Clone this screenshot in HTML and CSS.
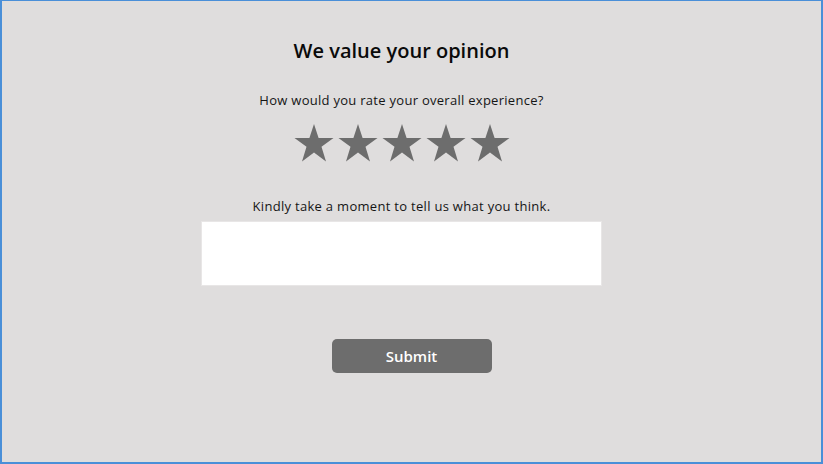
FILE: index.html
```html
<!DOCTYPE html>
<html>
<head>
<meta charset="utf-8">
<link rel="stylesheet" href="styles.css">
</head>
<body>
<div class="frame">
  <h1 class="title">We value your opinion</h1>
  <p class="question">How would you rate your overall experience?</p>
  <div class="stars">
    <svg class="star" viewBox="0 0 40 40"><polygon points="20,1 24.6,15 39.5,15 27.5,23.8 32,38.5 20,29.5 8,38.5 12.5,23.8 0.5,15 15.4,15"/></svg>
    <svg class="star" viewBox="0 0 40 40"><polygon points="20,1 24.6,15 39.5,15 27.5,23.8 32,38.5 20,29.5 8,38.5 12.5,23.8 0.5,15 15.4,15"/></svg>
    <svg class="star" viewBox="0 0 40 40"><polygon points="20,1 24.6,15 39.5,15 27.5,23.8 32,38.5 20,29.5 8,38.5 12.5,23.8 0.5,15 15.4,15"/></svg>
    <svg class="star" viewBox="0 0 40 40"><polygon points="20,1 24.6,15 39.5,15 27.5,23.8 32,38.5 20,29.5 8,38.5 12.5,23.8 0.5,15 15.4,15"/></svg>
    <svg class="star" viewBox="0 0 40 40"><polygon points="20,1 24.6,15 39.5,15 27.5,23.8 32,38.5 20,29.5 8,38.5 12.5,23.8 0.5,15 15.4,15"/></svg>
  </div>
  <p class="prompt">Kindly take a moment to tell us what you think.</p>
  <textarea class="feedback"></textarea>
  <button class="submit">Submit</button>
</div>
</body>
</html>
```
FILE: styles.css
```css
html, body {
  margin: 0;
  padding: 0;
}
body {
  width: 823px;
  height: 464px;
  font-family: "Open Sans", "DejaVu Sans", sans-serif;
  color: #111;
}
.frame {
  box-sizing: border-box;
  width: 823px;
  height: 464px;
  background: #dfdddd;
  border: 2px solid #4a8fd8;
  border-top-width: 1px;
  display: flex;
  flex-direction: column;
  align-items: center;
  padding-top: 38px;
  padding-right: 20px;
}
.title {
  margin: 0;
  font-size: 20px;
  line-height: 24px;
  font-weight: 600;
  color: #0a0a0a;
}
.question {
  margin: 28px 0 0;
  font-size: 13px;
  line-height: 18px;
  letter-spacing: 0.28px;
  color: #151515;
}
.stars {
  display: flex;
  gap: 4px;
  margin-top: 14px;
}
.star {
  width: 40px;
  height: 40px;
  fill: #6d6d6d;
}
.prompt {
  margin: 34px 0 0;
  font-size: 13px;
  line-height: 18px;
  letter-spacing: 0.3px;
  color: #151515;
}
.feedback {
  box-sizing: border-box;
  width: 401px;
  height: 65px;
  margin-top: 6px;
  border: 1px solid #e8e6e6;
  background: #fff;
  resize: none;
  outline: none;
}
.submit {
  margin-top: 53px;
  margin-left: 20px;
  width: 160px;
  height: 34px;
  border: none;
  border-radius: 5px;
  background: #6d6d6d;
  color: #fff;
  font-family: "Open Sans", "DejaVu Sans", sans-serif;
  font-size: 15px;
  font-weight: 600;
}
```
